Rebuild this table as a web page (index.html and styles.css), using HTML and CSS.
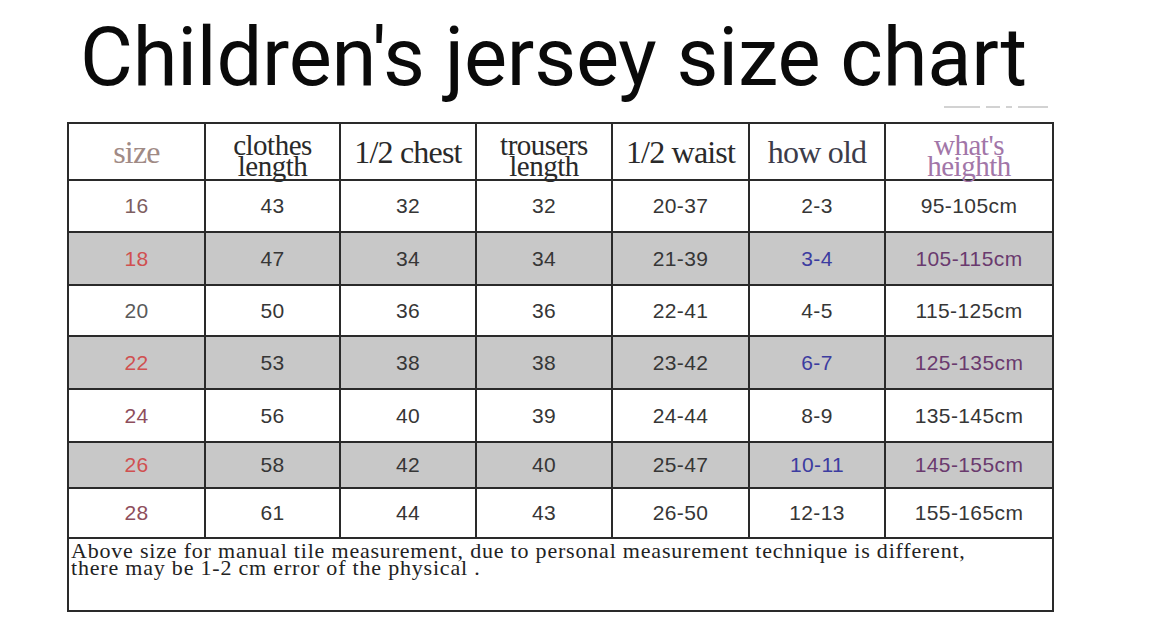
FILE: index.html
```html
<!DOCTYPE html>
<html>
<head>
<meta charset="utf-8">
<link rel="stylesheet" href="styles.css">
</head>
<body>
<div class="page">
  <h1 class="title">Children's jersey size chart</h1>
  <div class="faint"><i class="d1"></i><i class="d2"></i><i class="d3"></i><i class="d4"></i></div>
  <table class="chart">
    <colgroup>
      <col style="width:137px"><col style="width:135px"><col style="width:136px"><col style="width:136px"><col style="width:137px"><col style="width:136px"><col style="width:168px">
    </colgroup>
    <thead>
      <tr class="head">
        <th class="h-size">size</th>
        <th><span class="two"><span class="l1">clothes</span><span class="l2">length</span></span></th>
        <th>1/2 chest</th>
        <th><span class="two"><span class="l1">trousers</span><span class="l2">length</span></span></th>
        <th>1/2 waist</th>
        <th class="h-old">how old</th>
        <th class="h-height"><span class="two"><span class="l1">what's</span><span class="l2">heighth</span></span></th>
      </tr>
    </thead>
    <tbody>
      <tr class="r1"><td class="s-brown">16</td><td>43</td><td>32</td><td>32</td><td>20-37</td><td>2-3</td><td>95-105cm</td></tr>
      <tr class="r2 shade"><td class="s-red">18</td><td>47</td><td>34</td><td>34</td><td>21-39</td><td class="blue">3-4</td><td class="purple">105-115cm</td></tr>
      <tr class="r3"><td class="s-gray">20</td><td>50</td><td>36</td><td>36</td><td>22-41</td><td>4-5</td><td>115-125cm</td></tr>
      <tr class="r4 shade"><td class="s-red">22</td><td>53</td><td>38</td><td>38</td><td>23-42</td><td class="blue">6-7</td><td class="purple">125-135cm</td></tr>
      <tr class="r5"><td class="s-rose">24</td><td>56</td><td>40</td><td>39</td><td>24-44</td><td>8-9</td><td>135-145cm</td></tr>
      <tr class="r6 shade"><td class="s-red">26</td><td>58</td><td>42</td><td>40</td><td>25-47</td><td class="blue">10-11</td><td class="purple">145-155cm</td></tr>
      <tr class="r7"><td class="s-rose">28</td><td>61</td><td>44</td><td>43</td><td>26-50</td><td>12-13</td><td>155-165cm</td></tr>
      <tr class="note"><td colspan="7">Above size for manual tile measurement, due to personal measurement technique is different,<br>there may be 1-2 cm error of the physical .</td></tr>
    </tbody>
  </table>
</div>
</body>
</html>
```

FILE: styles.css
```css
html, body {
  margin: 0;
  padding: 0;
  background: #ffffff;
}
.page {
  width: 1153px;
  height: 637px;
  overflow: hidden;
}
.title {
  margin: 0;
  padding: 16px 0 0 80px;
  height: 84px;
  font-family: Roboto, "Liberation Sans", sans-serif;
  font-weight: 400;
  font-size: 81.3px;
  line-height: 84px;
  color: #0a0a0a;
  letter-spacing: -0.2px;
  white-space: nowrap;
}
.faint {
  margin: 6px 0 13px 944px;
  height: 3px;
  display: flex;
  gap: 6px;
  align-items: flex-start;
}
.faint i {
  display: block;
  height: 2px;
  background: #d2d2d2;
}
.faint .d1 { width: 36px; }
.faint .d2 { width: 14px; }
.faint .d3 { width: 6px; }
.faint .d4 { width: 30px; }
.chart {
  margin-left: 67px;
  width: 987px;
  border-collapse: collapse;
  table-layout: fixed;
  border: 2px solid #2a2a2a;
}
.chart th, .chart td {
  border: 2px solid #2a2a2a;
  padding: 0;
  text-align: center;
  vertical-align: middle;
}
.chart th {
  font-family: "Liberation Serif", "DejaVu Serif", serif;
  font-weight: 400;
  font-size: 32px;
  line-height: 36px;
  color: #2a2a2a;
  letter-spacing: -0.8px;
  white-space: nowrap;
}
.head { height: 57px; }
.two {
  display: inline-flex;
  flex-direction: column;
  align-items: center;
  font-size: 29px;
  letter-spacing: -0.5px;
}
.two .l1, .two .l2 {
  display: block;
  line-height: 21px;
}
.h-size { color: #a08a85 !important; }
.h-old { color: #3c3c4a !important; }
.h-height { color: #a276a8 !important; }
.chart td {
  font-family: "Liberation Sans", Arial, sans-serif;
  font-size: 21px;
  letter-spacing: 0.4px;
  color: #363636;
}
.r1 { height: 52px; }
.r2 { height: 53px; }
.r3 { height: 51px; }
.r4 { height: 53px; }
.r5 { height: 53px; }
.r6 { height: 46px; }
.r7 { height: 50px; }
.shade td { background: #c8c8c8; }
.s-brown { color: #7e5e60 !important; }
.s-red { color: #d05050 !important; }
.s-gray { color: #5a5a5a !important; }
.s-rose { color: #8e4e5c !important; }
.blue { color: #3c3ca0 !important; }
.purple { color: #6a3a6e !important; }
.note td {
  height: 68px;
  text-align: left;
  vertical-align: top;
  padding: 3px 0 0 2px;
  font-family: "Liberation Serif", "DejaVu Serif", serif;
  font-size: 22px;
  line-height: 17px;
  color: #222222;
  letter-spacing: 0.8px;
}
```
